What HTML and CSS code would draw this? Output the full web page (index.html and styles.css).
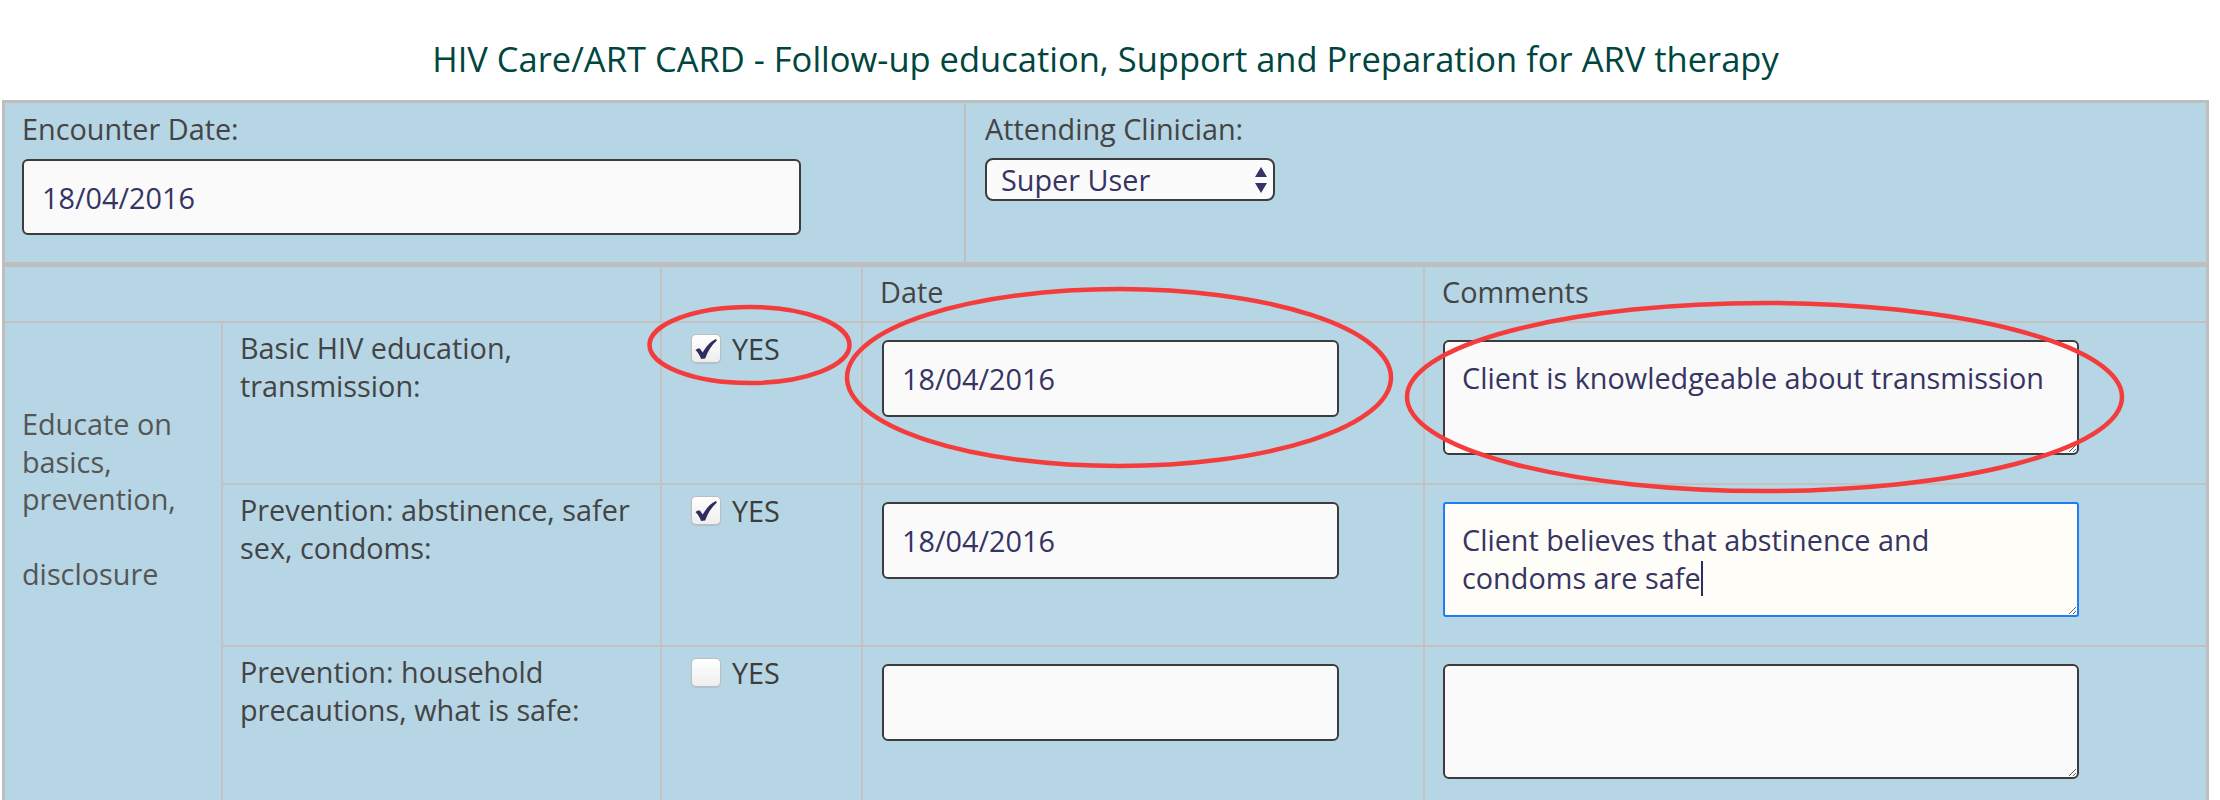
FILE: index.html
```html
<!DOCTYPE html>
<html lang="en">
<head>
<meta charset="utf-8">
<title>HIV Care/ART CARD - Follow-up education</title>
<link rel="stylesheet" href="styles.css">
</head>
<body>
<div class="page">
  <h1 class="title">HIV Care/ART CARD - Follow-up education, Support and Preparation for ARV therapy</h1>

  <section class="encounter">
    <div class="enc-col">
      <label class="lbl" for="encDate">Encounter Date:</label>
      <input id="encDate" class="text date-big" type="text" value="18/04/2016">
    </div>
    <div class="enc-col enc-clin">
      <label class="lbl" for="clin">Attending Clinician:</label>
      <div class="select-wrap">
        <select id="clin" class="select"><option>Super User</option></select>
        <svg class="arrows" viewBox="0 0 12 26" aria-hidden="true">
          <path d="M6 0 L12 10 L0 10 Z" fill="#363463"/>
          <path d="M0 16 L12 16 L6 26 Z" fill="#363463"/>
        </svg>
      </div>
    </div>
  </section>

  <div class="edu">
    <div class="cell head head-blank"></div>
    <div class="cell head"></div>
    <div class="cell head">Date</div>
    <div class="cell head last">Comments</div>

    <div class="cell group">Educate on basics, prevention,<br><br>disclosure</div>

    <div class="cell item">Basic HIV education, transmission:</div>
    <div class="cell check">
      <label class="yes"><span class="box checked"><svg class="tick" viewBox="0 0 22 20" aria-hidden="true"><path d="M0.4 11 C2 9.5 3.6 9 5.1 9.7 L7.7 13.6 C10.9 7.8 14.9 2.8 20.9 0 L21.9 1.5 C16.9 5.8 12.9 11.8 10.2 19.4 L6.1 19.9 C4.7 16.2 2.9 13.2 0.4 11 Z" fill="#2f2d5e"/></svg></span>YES</label>
    </div>
    <div class="cell field"><input class="text date" type="text" value="18/04/2016"></div>
    <div class="cell field comments last"><textarea class="text note">Client is knowledgeable about transmission</textarea></div>

    <div class="cell item">Prevention: abstinence, safer sex, condoms:</div>
    <div class="cell check">
      <label class="yes"><span class="box checked"><svg class="tick" viewBox="0 0 22 20" aria-hidden="true"><path d="M0.4 11 C2 9.5 3.6 9 5.1 9.7 L7.7 13.6 C10.9 7.8 14.9 2.8 20.9 0 L21.9 1.5 C16.9 5.8 12.9 11.8 10.2 19.4 L6.1 19.9 C4.7 16.2 2.9 13.2 0.4 11 Z" fill="#2f2d5e"/></svg></span>YES</label>
    </div>
    <div class="cell field"><input class="text date" type="text" value="18/04/2016"></div>
    <div class="cell field comments last"><textarea class="text note focused">Client believes that abstinence and condoms are safe</textarea><span class="caret"></span></div>

    <div class="cell item">Prevention: household precautions, what is safe:</div>
    <div class="cell check"><label class="yes"><span class="box"></span>YES</label></div>
    <div class="cell field"><input class="text date" type="text" value=""></div>
    <div class="cell field comments last"><textarea class="text note"></textarea></div>
  </div>
</div>

<svg class="annot" width="2220" height="800" viewBox="0 0 2220 800" aria-hidden="true">
  <g fill="none" stroke="#f43c3c" stroke-width="4.5">
    <ellipse cx="749.5" cy="345" rx="100" ry="38"/>
    <ellipse cx="1119" cy="377.5" rx="272" ry="88.5"/>
    <ellipse cx="1764.5" cy="397" rx="357.5" ry="94"/>
  </g>
</svg>
</body>
</html>
```

FILE: styles.css
```css
* { box-sizing: border-box; }

html, body { margin: 0; }

body {
  position: relative;
  height: 800px;
  overflow: hidden;
  background: #ffffff;
  font-family: "Open Sans", "Liberation Sans", sans-serif;
  font-size: 28.8px;
  line-height: 37.5px;
  color: #444444;
}

.page {
  width: 2207px;
  margin-left: 2px;
}

.title {
  margin: 0;
  padding: 33px 0 15px;
  font-size: 34.5px;
  line-height: 52px;
  font-weight: 400;
  color: #00463f;
  text-align: center;
}

/* ---- encounter header ---- */
.encounter {
  display: grid;
  grid-template-columns: 959px 1fr;
  background: #b6d5e5;
  border: 3px solid #bebebe;
  border-bottom-width: 2px;
}

.enc-col {
  padding: 7px 17px 27px;
}

.enc-clin {
  border-left: 2px solid #c0c0c0;
  padding-left: 19px;
}

.lbl {
  display: block;
  color: #444444;
}

.text {
  font: inherit;
  color: #363463;
  background: #fafafa;
  border: 2px solid #3c3c3c;
  border-radius: 6px;
  padding: 0 18px;
  outline: none;
}

.date-big {
  display: block;
  margin-top: 11.5px;
  width: 779px;
  height: 76px;
}

.select-wrap {
  position: relative;
  width: 290px;
  margin-top: 10.5px;
}

.select {
  display: block;
  appearance: none;
  -webkit-appearance: none;
  font: inherit;
  color: #363463;
  width: 290px;
  height: 43px;
  padding: 0 0 0 14px;
  border: 2px solid #3c3c3c;
  border-radius: 8px;
  background: #fbfbfb;
  line-height: 37.5px;
}

.arrows {
  position: absolute;
  left: 270px;
  top: 9px;
  width: 12px;
  height: 26px;
  pointer-events: none;
}

/* ---- education grid ---- */
.edu {
  display: grid;
  grid-template-columns: 218px 439px 201px 562px 781px;
  background: #b6d5e5;
  border: 3px solid #bebebe;
  border-bottom: 0;
}

.cell {
  border-right: 2px solid #c2c2c2;
  border-bottom: 2px solid #c2c2c2;
}

.cell.last { border-right: 0; }

.head {
  height: 56px;
  padding: 6px 17px 0;
  color: #444444;
}

.head-blank { grid-column: span 2; }

.group {
  grid-row: span 3;
  padding: 82px 10px 0 17px;
  color: #555555;
}

.item {
  padding: 6px 6px 0 17px;
  color: #444444;
}

.check {
  padding: 7px 0 0 29px;
}

.yes {
  display: flex;
  align-items: center;
  gap: 11px;
  color: #3d3d3d;
}

.box {
  flex: none;
  width: 30px;
  height: 29px;
  border: 1.5px solid #bdbdbd;
  border-radius: 5px;
  background: linear-gradient(#ffffff, #eeeeee);
  box-shadow: 0 1px 1px rgba(0, 0, 0, 0.08);
  display: flex;
  align-items: center;
  justify-content: center;
}

.tick {
  width: 22px;
  height: 20px;
  margin-top: 1px;
}

.field {
  padding: 17px 0 28px 19px;
}

.field.comments {
  position: relative;
  padding-left: 18px;
}

.date {
  display: block;
  width: 457px;
  height: 77px;
}

.note {
  display: block;
  width: 636px;
  height: 115px;
  padding: 17px 26px 17px 17px;
  line-height: 37.5px;
}

.note.focused {
  border-color: #1f7ef6;
  border-radius: 3px;
  background: #fefdf8;
}

.caret {
  position: absolute;
  left: 276px;
  top: 76px;
  width: 2px;
  height: 35px;
  background: #2f2d5e;
}

/* ---- annotation overlay ---- */
.annot {
  position: absolute;
  left: 0;
  top: 0;
  pointer-events: none;
}
```
